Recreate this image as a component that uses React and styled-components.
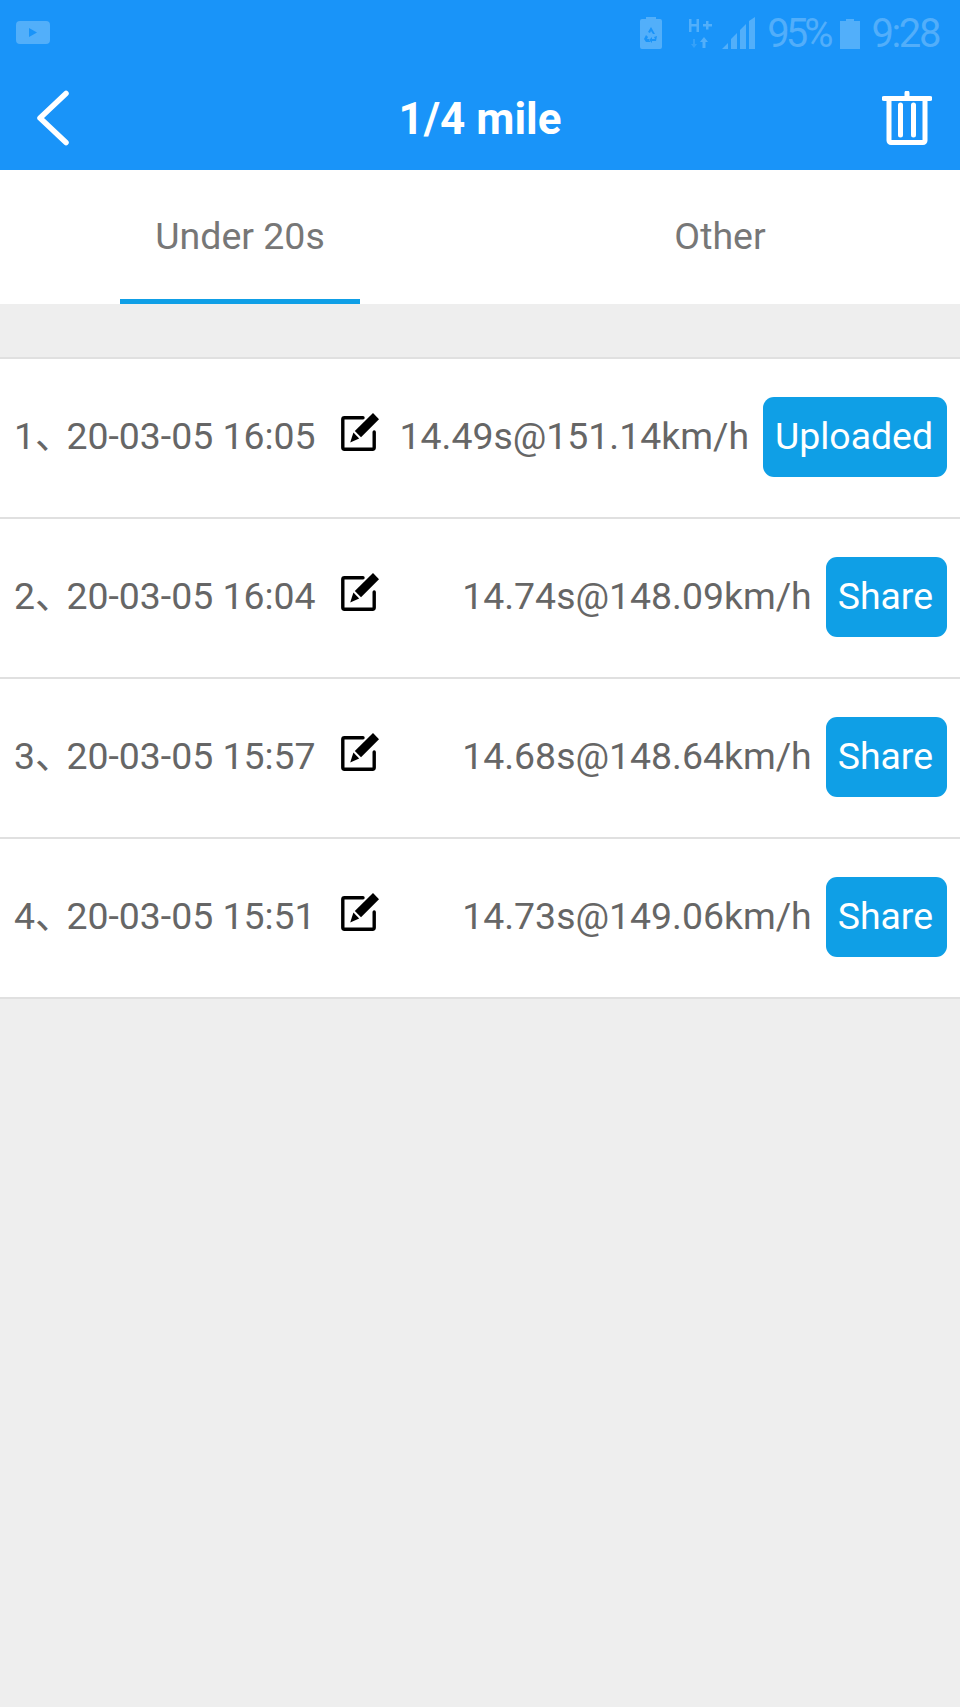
import React from 'react';
import styled, { createGlobalStyle } from 'styled-components';

const GlobalStyle = createGlobalStyle`
  html, body {
    margin: 0;
    padding: 0;
    background: #eeeeee;
  }
  * {
    box-sizing: border-box;
  }
`;

const Page = styled.div`
  width: 960px;
  min-height: 1707px;
  background: #eeeeee;
  font-family: Roboto, "Noto Sans CJK SC", sans-serif;
`;

const Header = styled.header`
  height: 170px;
  background: #1994f9;
  display: flex;
  flex-direction: column;
`;

const StatusBar = styled.div`
  height: 66px;
  padding: 17px 21px 0 16px;
  display: flex;
  align-items: flex-start;
  color: rgba(255, 255, 255, 0.25);
`;

const StatusIcons = styled.div`
  margin-left: auto;
  display: flex;
  align-items: flex-start;
`;

const StatusText = styled.span`
  font-size: 40px;
  line-height: 34px;
  letter-spacing: ${(p) => p.$tight}px;
  margin-left: ${(p) => p.$left}px;
`;

const StatusSvg = styled.svg`
  display: block;
  fill: currentColor;
  margin-left: ${(p) => p.$left || 0}px;
  margin-top: ${(p) => p.$top || 0}px;
`;

const NavBar = styled.div`
  flex: 1;
  display: grid;
  grid-template-columns: 1fr auto 1fr;
  align-items: center;
  padding: 0 28px;
`;

const Title = styled.h1`
  margin: 2px 0 0;
  color: #ffffff;
  font-size: 44px;
  font-weight: 700;
`;

const NavButton = styled.button`
  border: 0;
  padding: 0;
  margin-left: ${(p) => (p.$end ? 0 : 8)}px;
  background: none;
  display: flex;
  justify-self: ${(p) => (p.$end ? 'end' : 'start')};
`;

const Tabs = styled.div`
  height: 134px;
  background: #ffffff;
  display: flex;
`;

const Tab = styled.div`
  flex: 1;
  position: relative;
  display: flex;
  align-items: center;
  justify-content: center;
  padding-bottom: 2px;
  color: #777777;
  font-size: 37.5px;

  ${(p) =>
    p.$active &&
    `
    &::after {
      content: '';
      position: absolute;
      left: 25%;
      right: 25%;
      bottom: 0;
      height: 5px;
      background: #0f9fe6;
    }
  `}
`;

const List = styled.div`
  margin-top: 53px;
  border-top: 2px solid #e0e0e0;
`;

const Row = styled.div`
  height: 160px;
  padding: 0 13px 3px 14px;
  background: #ffffff;
  border-bottom: 2px solid #e0e0e0;
  display: flex;
  align-items: center;
  color: #666666;
  font-size: 37.4px;
  line-height: 44px;
`;

const RowDate = styled.span`
  width: 326px;
  margin-bottom: 2px;
  white-space: nowrap;
`;

const RowMark = styled.span`
  letter-spacing: -6px;
`;

const EditIcon = styled.svg`
  display: block;
  flex: none;
  margin-bottom: 10px;
`;

const RowResult = styled.span`
  flex: 1;
  margin-bottom: 2px;
  text-align: right;
  white-space: nowrap;
`;

const ActionButton = styled.button`
  height: 80px;
  margin-left: 14px;
  padding: 0 14px 2px 12px;
  border: 0;
  border-radius: 11px;
  background: #0f9fe6;
  color: #ffffff;
  font-family: inherit;
  font-size: 37.4px;
`;

const records = [
  { index: 1, date: '20-03-05 16:05', result: '14.49s@151.14km/h', action: 'Uploaded' },
  { index: 2, date: '20-03-05 16:04', result: '14.74s@148.09km/h', action: 'Share' },
  { index: 3, date: '20-03-05 15:57', result: '14.68s@148.64km/h', action: 'Share' },
  { index: 4, date: '20-03-05 15:51', result: '14.73s@149.06km/h', action: 'Share' },
];

const Edit = () => (
  <EditIcon width="40" height="40" viewBox="0 0 40 40">
    <path
      d="M23 5.800H4.500a1.700 1.700 0 0 0-1.700 1.700v28a1.700 1.700 0 0 0 1.700 1.700h28a1.700 1.700 0 0 0 1.700-1.700V20"
      fill="none"
      stroke="#000"
      strokeWidth="3.4"
      strokeLinecap="round"
    />
    <path d="M33 1l6 6.200-18 18-6.200-6.200z" fill="#000" />
    <path d="M13.400 20.600l5.800 5.900-9 4z" fill="#000" />
  </EditIcon>
);

const App = () => (
  <Page>
    <GlobalStyle />
    <Header>
      <StatusBar>
        <StatusSvg width="34" height="23" viewBox="0 0 34 23" $top={4}>
          <path
            fillRule="evenodd"
            d="M4 0h26a4 4 0 0 1 4 4v15a4 4 0 0 1-4 4H4a4 4 0 0 1-4-4V4a4 4 0 0 1 4-4zM13 7v9l8-4.500z"
          />
        </StatusSvg>
        <StatusIcons>
          <StatusSvg width="22" height="32" viewBox="0 0 22 32">
            <path
              fillRule="evenodd"
              d="M6 2V0h10v2h4a2 2 0 0 1 2 2v26a2 2 0 0 1-2 2H2a2 2 0 0 1-2-2V4a2 2 0 0 1 2-2zM11 10l-3 5 2 1 1-2 2 3h2zM6 18l-2 4 2 3h4v-3H7l1-2zM17 19l-3 1 1 2h-3v-2l-3 3 3 3v-2h4z"
            />
          </StatusSvg>
          <StatusSvg width="23" height="30" viewBox="0 0 23 30" $left={27} $top={2}>
            <path d="M0 0h2.500v5h5V0H10v13H7.500V7.500h-5V13H0zM14 5h3V2h2.500v3H23v2.500h-3.500v3H17v-3h-3z" />
            <path opacity="0.5" d="M4 20h2v5h2l-3 4-3-4h2z" />
            <path d="M15 18l4 5h-2.500v6h-3v-6H11z" />
          </StatusSvg>
          <StatusSvg width="33" height="32" viewBox="0 0 33 32" $left={10}>
            <path d="M0 32l6-6v6zM9 32V22l6-6v16zM18 32V13l6-6v25zM27 32V4l6-4v32z" />
          </StatusSvg>
          <StatusText $left={12} $tight={-4}>95%</StatusText>
          <StatusSvg width="20" height="30" viewBox="0 0 20 30" $left={11} $top={2}>
            <path d="M6 0h8v2h6v28H0V2h6z" />
          </StatusSvg>
          <StatusText $left={11} $tight={-2.4}>9:28</StatusText>
        </StatusIcons>
      </StatusBar>
      <NavBar>
        <NavButton aria-label="Back">
          <svg width="34" height="56" viewBox="0 0 34 56" fill="none">
            <path
              d="M30 3.500L4 28l26 24.500"
              stroke="#fff"
              strokeWidth="5.500"
              strokeLinecap="round"
              strokeLinejoin="round"
            />
          </svg>
        </NavButton>
        <Title>1/4 mile</Title>
        <NavButton $end aria-label="Delete">
          <svg width="50" height="54" viewBox="0 0 50 54" fill="none" stroke="#fff" strokeLinecap="round">
            <path d="M2 7.500h46M25 2v5" strokeWidth="5" />
            <path d="M7 9v40.500a2 2 0 0 0 2 2h32a2 2 0 0 0 2-2V9" strokeWidth="5" />
            <path d="M18.500 14v30M31.500 14v30" strokeWidth="5" />
          </svg>
        </NavButton>
      </NavBar>
    </Header>
    <Tabs>
      <Tab $active>Under 20s</Tab>
      <Tab>Other</Tab>
    </Tabs>
    <List>
      {records.map((record) => (
        <Row key={record.index}>
          <RowDate>
            {record.index}
            <RowMark>、</RowMark>
            {record.date}
          </RowDate>
          <Edit />
          <RowResult>{record.result}</RowResult>
          <ActionButton>{record.action}</ActionButton>
        </Row>
      ))}
    </List>
  </Page>
);

export default App;
